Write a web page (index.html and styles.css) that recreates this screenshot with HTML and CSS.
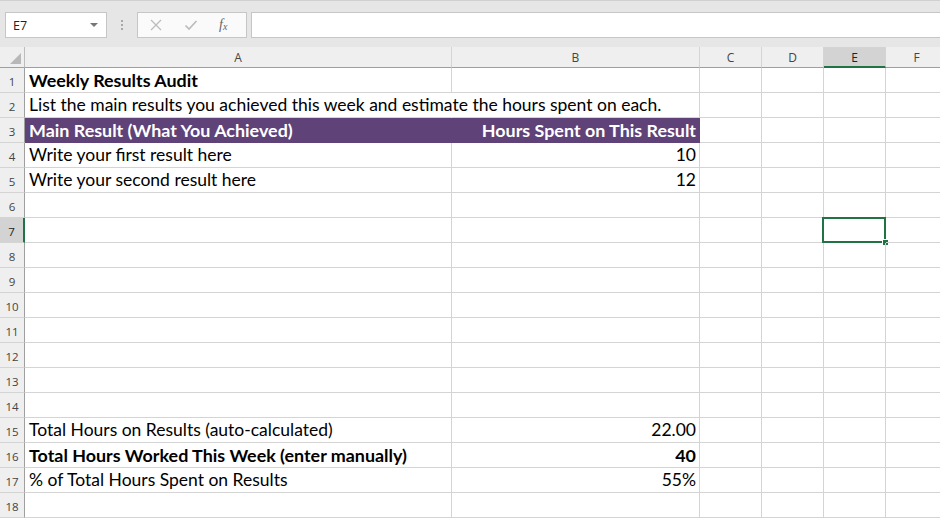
FILE: index.html
```html
<!DOCTYPE html>
<html>
<head>
<meta charset="utf-8">
<link rel="stylesheet" href="styles.css">
</head>
<body>
<div class="app">
  <div class="toolbar">
    <div class="namebox"><span class="ref">E7</span><span class="caret"></span></div>
    <div class="grip"><i></i><i></i><i></i></div>
    <div class="fxbox">
      <svg class="ic x" width="14" height="14" viewBox="0 0 14 14"><path d="M2 2 L12 12 M12 2 L2 12" stroke="#bcbcbc" stroke-width="1.3" fill="none"/></svg>
      <svg class="ic v" width="16" height="14" viewBox="0 0 16 14"><path d="M2.5 7.5 L6 11 L13.5 3" stroke="#bcbcbc" stroke-width="1.7" fill="none"/></svg>
      <span class="fx">f<sub>x</sub></span>
    </div>
    <div class="formula"></div>
  </div>
  <div class="sheet">
    <div class="corner"><span class="tri"></span></div>
    <div class="ch">A</div>
    <div class="ch">B</div>
    <div class="ch">C</div>
    <div class="ch">D</div>
    <div class="ch sel">E</div>
    <div class="ch">F</div>

    <div class="rh">1</div><div class="c b">Weekly Results Audit</div><div class="c"></div><div class="c"></div><div class="c"></div><div class="c"></div><div class="c"></div>
    <div class="rh">2</div><div class="c spill">List the main results you achieved this week and estimate the hours spent on each.</div><div class="c"></div><div class="c"></div><div class="c"></div><div class="c"></div><div class="c"></div>
    <div class="rh">3</div><div class="c hd">Main Result (What You Achieved)</div><div class="c hd r">Hours Spent on This Result</div><div class="c"></div><div class="c"></div><div class="c"></div><div class="c"></div>
    <div class="rh">4</div><div class="c">Write your first result here</div><div class="c r">10</div><div class="c"></div><div class="c"></div><div class="c"></div><div class="c"></div>
    <div class="rh">5</div><div class="c">Write your second result here</div><div class="c r">12</div><div class="c"></div><div class="c"></div><div class="c"></div><div class="c"></div>
    <div class="rh">6</div><div class="c"></div><div class="c"></div><div class="c"></div><div class="c"></div><div class="c"></div><div class="c"></div>
    <div class="rh sel">7</div><div class="c"></div><div class="c"></div><div class="c"></div><div class="c"></div><div class="c active"></div><div class="c"></div>
    <div class="rh">8</div><div class="c"></div><div class="c"></div><div class="c"></div><div class="c"></div><div class="c"></div><div class="c"></div>
    <div class="rh">9</div><div class="c"></div><div class="c"></div><div class="c"></div><div class="c"></div><div class="c"></div><div class="c"></div>
    <div class="rh">10</div><div class="c"></div><div class="c"></div><div class="c"></div><div class="c"></div><div class="c"></div><div class="c"></div>
    <div class="rh">11</div><div class="c"></div><div class="c"></div><div class="c"></div><div class="c"></div><div class="c"></div><div class="c"></div>
    <div class="rh">12</div><div class="c"></div><div class="c"></div><div class="c"></div><div class="c"></div><div class="c"></div><div class="c"></div>
    <div class="rh">13</div><div class="c"></div><div class="c"></div><div class="c"></div><div class="c"></div><div class="c"></div><div class="c"></div>
    <div class="rh">14</div><div class="c"></div><div class="c"></div><div class="c"></div><div class="c"></div><div class="c"></div><div class="c"></div>
    <div class="rh">15</div><div class="c">Total Hours on Results (auto-calculated)</div><div class="c r">22.00</div><div class="c"></div><div class="c"></div><div class="c"></div><div class="c"></div>
    <div class="rh">16</div><div class="c b">Total Hours Worked This Week (enter manually)</div><div class="c r b">40</div><div class="c"></div><div class="c"></div><div class="c"></div><div class="c"></div>
    <div class="rh">17</div><div class="c">% of Total Hours Spent on Results</div><div class="c r">55%</div><div class="c"></div><div class="c"></div><div class="c"></div><div class="c"></div>
    <div class="rh">18</div><div class="c"></div><div class="c"></div><div class="c"></div><div class="c"></div><div class="c"></div><div class="c"></div>
  </div>
</div>
</body>
</html>
```
FILE: styles.css
```css
* { box-sizing: border-box; }
html, body { margin: 0; padding: 0; background: #fff; }
.app { width: 940px; height: 518px; overflow: hidden; position: relative; }

.toolbar {
  height: 47px;
  background: #e6e6e6;
  border-top: 1px solid #d0d0d0;
  display: flex;
  align-items: flex-start;
  padding-top: 11px;
}
.namebox {
  margin-left: 5px;
  width: 102px;
  height: 26px;
  background: #fff;
  border: 1px solid #c6c6c6;
  display: flex;
  align-items: center;
  justify-content: space-between;
  padding: 0 8px 0 7px;
  font-family: "Open Sans", "Noto Sans", sans-serif;
  font-size: 12.5px;
  color: #222;
}
.caret {
  width: 0; height: 0;
  border-left: 4px solid transparent;
  border-right: 4px solid transparent;
  border-top: 4px solid #777;
}
.grip {
  width: 30px;
  height: 26px;
  display: flex;
  flex-direction: column;
  align-items: center;
  justify-content: center;
  gap: 2px;
}
.grip i { display: block; width: 2px; height: 2px; background: #a8a8a8; }
.fxbox {
  width: 110px;
  height: 26px;
  background: #fafafa;
  border: 1px solid #c6c6c6;
  display: flex;
  align-items: center;
  padding: 0 0 0 11px;
}
.ic.x { margin-right: 20px; }
.ic.v { margin-right: 20px; }
.fx {
  font-family: "Liberation Serif", serif;
  font-style: italic;
  font-size: 14px;
  color: #666;
  line-height: 1;
}
.fx sub { font-size: 10px; vertical-align: -1px; }
.formula {
  margin-left: 4px;
  flex: 1;
  height: 26px;
  background: #fff;
  border: 1px solid #c6c6c6;
  border-right: none;
}

.sheet {
  display: grid;
  grid-template-columns: 25px 427px 248px 62px 62px 62px 62px;
  grid-template-rows: 21px;
  grid-auto-rows: 25px;
  width: 948px;
  font-family: Lato, "Open Sans", sans-serif;
  font-size: 17.5px;
  color: #000;
}
.corner {
  background: #efefef;
  border-right: 1px solid #bdbdbd;
  border-bottom: 1px solid #9f9f9f;
  position: relative;
}
.tri {
  position: absolute;
  right: 3px; bottom: 3px;
  width: 0; height: 0;
  border-left: 11px solid transparent;
  border-bottom: 11px solid #b8b8b8;
}
.ch {
  background: #efefef;
  border-right: 1px solid #d4d4d4;
  border-bottom: 1px solid #9f9f9f;
  font-family: "Open Sans", "Noto Sans", sans-serif;
  font-size: 12px;
  color: #444;
  display: flex;
  align-items: center;
  justify-content: center;
  padding-top: 1px;
}
.ch.sel {
  background: #d3d3d3;
  border-bottom: 2px solid #217346;
  color: #222;
}
.rh {
  background: #efefef;
  border-right: 1px solid #9f9f9f;
  border-bottom: 1px solid #d4d4d4;
  font-family: "Open Sans", "Noto Sans", sans-serif;
  font-size: 11.5px;
  color: #444;
  display: flex;
  align-items: center;
  justify-content: center;
  padding-top: 2px;
}
.rh.sel {
  background: #d3d3d3;
  border-right: 2px solid #217346;
  color: #222;
}
.c {
  border-right: 1px solid #d4d4d4;
  border-bottom: 1px solid #d4d4d4;
  padding: 1px 3px 0 4px;
  line-height: 22px;
  white-space: nowrap;
  overflow: hidden;
  position: relative;
}
.c.b { font-weight: bold; font-size: 17.9px; }
.c.r { text-align: right; }
.c.spill { overflow: visible; border-right-color: transparent; z-index: 1; }
.c.hd {
  background: #5e4278;
  border-color: #5e4278;
  color: #fff;
  font-weight: bold;
  font-size: 17.9px;
}
.c.active { overflow: visible; }
.c.active::before {
  content: "";
  position: absolute;
  left: -2px; top: -1px; right: -1px; bottom: -1px;
  border: 2px solid #217346;
}
.c.active::after {
  content: "";
  position: absolute;
  right: -3px; bottom: -3px;
  width: 5px; height: 5px;
  background: #217346;
  border: 1px solid #fff;
  box-sizing: content-box;
  margin: -1px;
}
```
